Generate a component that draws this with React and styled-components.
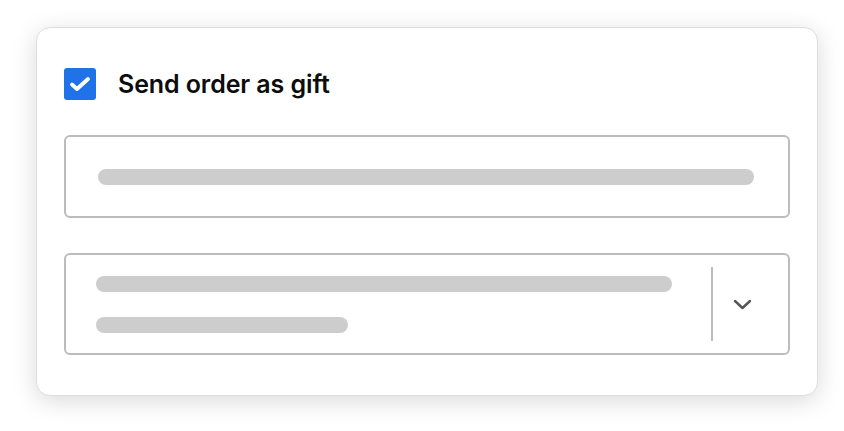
import React from "react";
import styled, { createGlobalStyle } from "styled-components";

const GlobalStyle = createGlobalStyle`
  html, body {
    margin: 0;
    padding: 0;
    background: #ffffff;
    font-family: Inter, "Noto Sans", sans-serif;
  }
`;

const Page = styled.div`
  box-sizing: border-box;
  min-height: 431px;
  padding: 27px 26px 35px 36px;
`;

const Card = styled.div`
  box-sizing: border-box;
  width: 782px;
  height: 369px;
  padding: 40px 27px;
  background: #fff;
  border: 1px solid #dedede;
  border-radius: 14px;
  box-shadow: 0 5px 24px rgba(0, 0, 0, 0.15);
  display: flex;
  flex-direction: column;
  gap: 35px;
`;

const CheckRow = styled.label`
  display: flex;
  align-items: center;
  gap: 22px;
  height: 32px;
`;

const CheckBox = styled.span`
  width: 32px;
  height: 32px;
  border-radius: 3px;
  background: #1f72e8;
  display: flex;
  align-items: center;
  justify-content: center;
`;

const Label = styled.span`
  font-size: 25px;
  font-weight: 600;
  color: #0d0d0d;
  letter-spacing: -0.1px;
`;

const Field = styled.div`
  box-sizing: border-box;
  width: 726px;
  height: ${(p) => p.$h}px;
  border: 2px solid #bcbcbc;
  border-radius: 6px;
  display: flex;
  align-items: center;
  padding: ${(p) => p.$pad};
`;

const Bar = styled.div`
  height: 16px;
  border-radius: 8px;
  background: #cdcdcd;
  width: ${(p) => p.$w || "100%"};
`;

const Lines = styled.div`
  flex: 1;
  display: flex;
  flex-direction: column;
  gap: 25px;
  margin-right: 39px;
`;

const Divider = styled.div`
  width: 2px;
  height: 74px;
  background: #bcbcbc;
`;

const Chevron = styled.div`
  margin: 0 36px 0 20px;
  display: flex;
  align-items: center;
`;

export default function App() {
  return (
    <>
      <GlobalStyle />
      <Page>
        <Card>
          <CheckRow>
            <CheckBox>
              <svg width="22" height="16" viewBox="0 0 22 16">
                <path
                  d="M3 8.5 L8 13 L19 3"
                  fill="none"
                  stroke="#fff"
                  strokeWidth="3.8"
                  strokeLinecap="round"
                  strokeLinejoin="round"
                />
              </svg>
            </CheckBox>
            <Label>Send order as gift</Label>
          </CheckRow>
          <Field $h={83} $pad="0 34px 0 32px">
            <Bar />
          </Field>
          <Field $h={102} $pad="0 0 0 30px">
            <Lines>
              <Bar />
              <Bar $w="252px" />
            </Lines>
            <Divider />
            <Chevron>
              <svg width="19" height="11" viewBox="0 0 19 11">
                <path
                  d="M2 2 L9.5 9 L17 2"
                  fill="none"
                  stroke="#555"
                  strokeWidth="2.4"
                  strokeLinecap="round"
                  strokeLinejoin="round"
                />
              </svg>
            </Chevron>
          </Field>
        </Card>
      </Page>
    </>
  );
}
